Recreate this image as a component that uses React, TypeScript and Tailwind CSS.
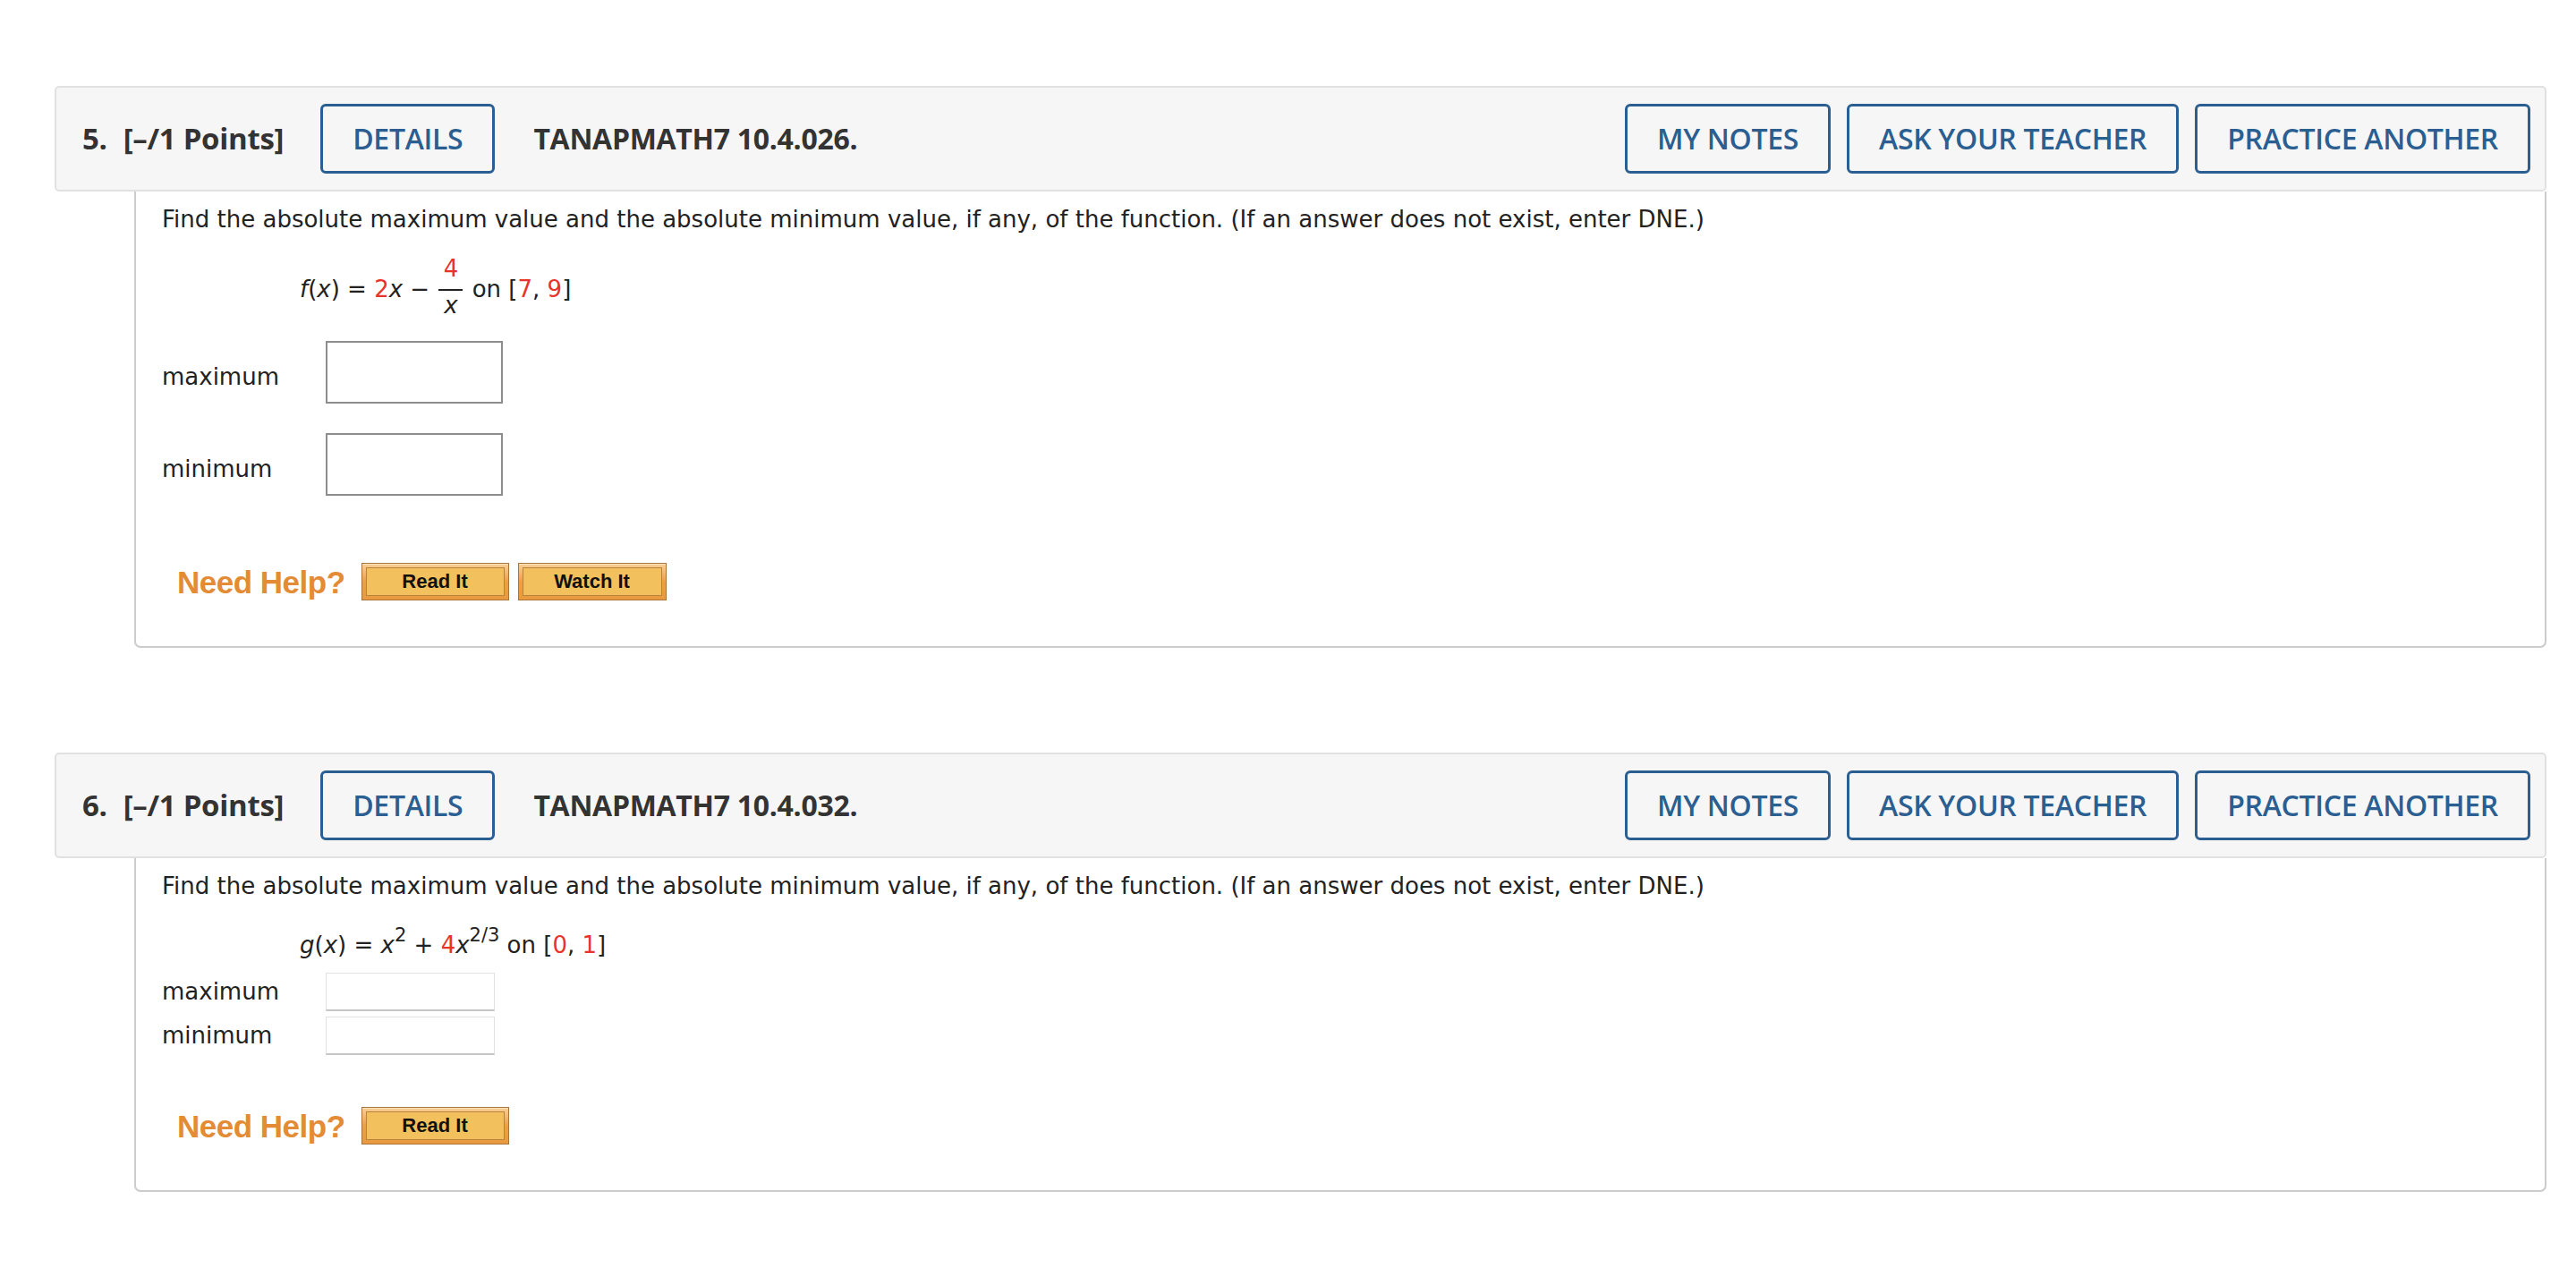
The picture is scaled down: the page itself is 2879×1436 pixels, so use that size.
import React from 'react';

const headerBtn =
  "h-[78px] px-[33px] flex items-center border-[3px] border-[#2b5e91] rounded-[6px] text-[#2b5e91] font-semibold text-[32px] tracking-[-0.3px] whitespace-nowrap bg-transparent";

function HelpButton({ label, w }: { label: string; w: string }) {
  return (
    <div
      className={`${w} h-[42px] border border-[#a9743a] bg-gradient-to-b from-[#f7cf94] via-[#ee9f45] to-[#e99a3e] p-[4px] shadow-[inset_0_1px_0_#fbe3c0]`}
    >
      <div className="h-full border border-[#b9833f] bg-[#f2c05c] flex items-center justify-center font-['Liberation_Sans',Arial,sans-serif] font-bold text-[22px] text-[#111] leading-none">
        {label}
      </div>
    </div>
  );
}

function NeedHelp({ watch }: { watch?: boolean }) {
  return (
    <div className="flex items-center pl-[17px]">
      <span className="font-['Liberation_Sans',Arial,sans-serif] font-bold text-[35px] text-[#e38b35] tracking-[-0.5px] leading-none">
        Need Help?
      </span>
      <div className="flex gap-[10px] ml-[18px]">
        <HelpButton label="Read It" w="w-[165px]" />
        {watch && <HelpButton label="Watch It" w="w-[166px]" />}
      </div>
    </div>
  );
}

function QuestionHeader({ num, code }: { num: string; code: string }) {
  return (
    <div className="h-[118px] border-2 border-[#e1e1e1] rounded-[5px] bg-[#f6f6f6] flex items-center pl-[29px] pr-[16px] font-['Open_Sans',sans-serif]">
      <span className="font-bold text-[33px] text-[#333] tracking-[-0.3px]">{num}.</span>
      <span className="ml-[18px] font-bold text-[33px] text-[#333] tracking-[-0.3px]">[–/1 Points]</span>
      <button className={`${headerBtn} ml-[41px]`}>DETAILS</button>
      <span className="ml-[43px] font-bold text-[32px] text-[#333] tracking-[-0.3px]">{code}</span>
      <div className="ml-auto flex gap-[18px]">
        <button className={headerBtn}>MY NOTES</button>
        <button className={headerBtn}>ASK YOUR TEACHER</button>
        <button className={headerBtn}>PRACTICE ANOTHER</button>
      </div>
    </div>
  );
}

const prompt =
  'Find the absolute maximum value and the absolute minimum value, if any, of the function. (If an answer does not exist, enter DNE.)';

const red = 'text-[#e8332a]';

export default function App() {
  return (
    <div className="min-h-screen bg-white pt-[96px] pl-[61px] pr-[33px] font-['DejaVu_Sans',Verdana,sans-serif] text-[#222]">
      {/* ── Question 5 ── */}
      <QuestionHeader num="5" code="TANAPMATH7 10.4.026." />
      <div className="ml-[89px] h-[510px] border-2 border-t-0 border-[#cccccc] rounded-b-[7px] pt-[13px] pl-[29px] text-[26px]">
        <p className="leading-[36px]">{prompt}</p>
        <div className="mt-[24px] pl-[154px] leading-[36px]">
          <i>f</i>(<i>x</i>) = <span className={red}>2</span><i>x</i> −{' '}
          <span className="inline-flex flex-col items-center align-middle mx-[2px]">
            <span className={`${red} leading-[26px] pb-[10px]`}>4</span>
            <span className="w-[27px] h-[2px] bg-[#222]" />
            <span className="leading-[26px] pt-[3px] pb-[7px]">
              <i>x</i>
            </span>
          </span>{' '}
          on [<span className={red}>7</span>, <span className={red}>9</span>]
        </div>
        <div className="mt-[20px] flex flex-col gap-[33px]">
          <div className="flex items-center">
            <span className="w-[183px] pt-[10px]">maximum</span>
            <div className="w-[198px] h-[70px] border-2 border-[#8d8d8d] bg-white" />
          </div>
          <div className="flex items-center">
            <span className="w-[183px] pt-[10px]">minimum</span>
            <div className="w-[198px] h-[70px] border-2 border-[#8d8d8d] bg-white" />
          </div>
        </div>
        <div className="mt-[75px]">
          <NeedHelp watch />
        </div>
      </div>

      <div className="h-[117px]" />

      {/* ── Question 6 ── */}
      <QuestionHeader num="6" code="TANAPMATH7 10.4.032." />
      <div className="ml-[89px] h-[373px] border-2 border-t-0 border-[#cccccc] rounded-b-[7px] pt-[13px] pl-[29px] text-[26px]">
        <p className="leading-[36px]">{prompt}</p>
        <div className="mt-[30px] pl-[154px] leading-[36px]">
          <i>g</i>(<i>x</i>) = <i>x</i>
          <sup className="text-[21px] leading-none relative -top-[13px] align-baseline">2</sup> +{' '}
          <span className={red}>4</span>
          <i>x</i>
          <sup className="text-[21px] leading-none relative -top-[13px] align-baseline">2/3</sup> on [
          <span className={red}>0</span>, <span className={red}>1</span>]
        </div>
        <div className="mt-[13px] flex flex-col gap-[6px]">
          <div className="flex items-center">
            <span className="w-[183px]">maximum</span>
            <div className="w-[189px] h-[43px] border border-[#e2e2e2] border-b-2 border-b-[#c6c6c6] bg-white" />
          </div>
          <div className="flex items-center">
            <span className="w-[183px]">minimum</span>
            <div className="w-[189px] h-[43px] border border-[#e2e2e2] border-b-2 border-b-[#c6c6c6] bg-white" />
          </div>
        </div>
        <div className="mt-[58px]">
          <NeedHelp />
        </div>
      </div>
    </div>
  );
}
